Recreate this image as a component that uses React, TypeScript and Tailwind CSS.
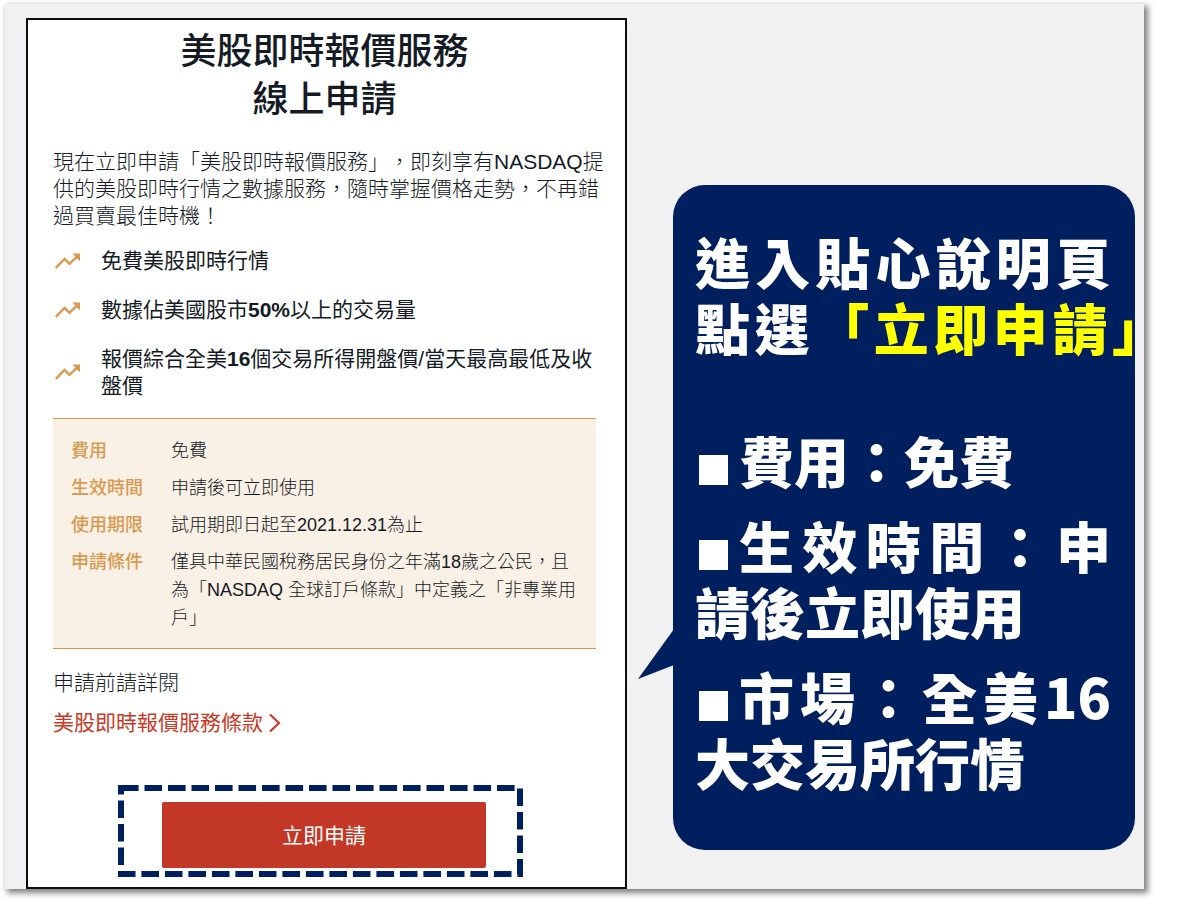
import type { ReactNode } from "react";

const features: { id: string; text: ReactNode }[] = [
  { id: "free", text: "免費美股即時行情" },
  {
    id: "volume",
    text: (
      <>
        數據佔美國股市<b className="font-bold">50%</b>以上的交易量
      </>
    ),
  },
  {
    id: "exchanges",
    text: (
      <>
        報價綜合全美<b className="font-bold">16</b>個交易所得開盤價/當天最高最低及收盤價
      </>
    ),
  },
];

const terms = [
  { label: "費用", value: "免費" },
  { label: "生效時間", value: "申請後可立即使用" },
  { label: "使用期限", value: "試用期即日起至2021.12.31為止" },
  {
    label: "申請條件",
    value: "僅具中華民國稅務居民身份之年滿18歲之公民，且為「NASDAQ 全球訂戶條款」中定義之「非專業用戶」",
  },
];

const notes = ["費用：免費", "生效時間：申請後立即使用", "市場：全美16大交易所行情"];

function TrendIcon() {
  return (
    <svg className="h-4 w-[26px] shrink-0" viewBox="0 0 26 16" fill="none" aria-hidden="true">
      <path d="M.8 14.8 9.5 6l5 4.8L22 3.5" stroke="#d99a50" strokeWidth="2.4" />
      <path d="M17.2.5H25V8.2l-2.4-2.2-2-.6-.6-2.3z" fill="#d99a50" />
    </svg>
  );
}

function FeatureList() {
  return (
    <ul className="mt-[18px] flex flex-col gap-[22px]">
      {features.map((feature) => (
        <li key={feature.id} className="flex items-center gap-5 pl-0.5">
          <TrendIcon />
          <span>{feature.text}</span>
        </li>
      ))}
    </ul>
  );
}

function TermsTable() {
  return (
    <div className="mt-[19px] border-y border-[#d9984f] bg-[#f9f0e6] px-[18px] pt-[18px] pb-4">
      <table className="w-full text-lg leading-7">
        <tbody>
          {terms.map((row) => (
            <tr key={row.label} className="group align-top">
              <th
                scope="row"
                className="w-[100px] p-0 pt-[9px] text-left font-medium text-[#d99a50] group-first:pt-0"
              >
                {row.label}
              </th>
              <td className="p-0 pt-[9px] font-light group-first:pt-0">{row.value}</td>
            </tr>
          ))}
        </tbody>
      </table>
    </div>
  );
}

function ApplyCard() {
  return (
    <main className="border-2 border-[#0b0f14] bg-white pt-2 pr-[29px] pb-2.5 pl-[25px] text-[21px] leading-[27px] text-[#141b24]">
      <h1 className="text-center text-4xl leading-[48px] font-medium">
        美股即時報價服務
        <br />
        線上申請
      </h1>
      <p className="mt-6 -mr-3 font-light">
        現在立即申請「美股即時報價服務」，即刻享有NASDAQ提供的美股即時行情之數據服務，隨時掌握價格走勢，不再錯過買賣最佳時機！
      </p>
      <FeatureList />
      <TermsTable />
      <p className="mt-5 font-light">申請前請詳閱</p>
      <a href="#terms" className="mt-[13px] flex items-center gap-1.5 text-[#c63a27]">
        美股即時報價服務條款
        <svg className="h-5 w-3" viewBox="0 0 12 20" fill="none" aria-hidden="true">
          <path d="M1 1.5 10 10l-9 8.5" stroke="currentColor" strokeWidth="2.2" />
        </svg>
      </a>
      <div className="relative mt-[49px] mr-[73px] ml-[65px] pt-[17px] pr-[37px] pb-[9px] pl-11">
        <svg
          className="pointer-events-none absolute inset-0 h-full w-full"
          viewBox="0 0 405 92"
          preserveAspectRatio="none"
          fill="none"
          aria-hidden="true"
        >
          <rect x="3" y="3" width="399" height="86" stroke="#001f5f" strokeWidth="6" strokeDasharray="17.6 5.9" />
        </svg>
        <button type="button" className="h-[66px] w-full rounded-xs bg-[#c33726] text-white">
          立即申請
        </button>
      </div>
    </main>
  );
}

function Callout() {
  return (
    <aside className="relative mt-[167px] self-start rounded-[32px] bg-[#001f5f] pt-[42px] pr-6 pb-14 pl-[22px] text-justify font-['Noto_Sans_CJK_TC',sans-serif] text-[55px] leading-[66px] font-black text-white">
      <svg className="absolute top-[444px] -left-[35px] h-[50px] w-9" viewBox="0 0 36 50" aria-hidden="true">
        <path d="M36 0 0 50l36-14z" fill="#001f5f" />
      </svg>
      <p className="[text-align-last:justify]">進入貼心說明頁</p>
      {/* closing bracket hangs past the right margin */}
      <p className="-mr-14 whitespace-nowrap [text-align-last:justify]">
        點選<span className="text-[#ffff00]">「立即申請」</span>
      </p>
      <ul className="mt-[67px] flex flex-col gap-[19px]">
        {notes.map((note) => (
          <li key={note}>
            <span className="float-left mt-[29px] mr-[11px] ml-1 h-[30px] w-[29px] bg-white" aria-hidden="true" />
            {note}
          </li>
        ))}
      </ul>
    </aside>
  );
}

export default function App() {
  return (
    <div
      lang="zh-Hant"
      className="bg-white pt-1 pr-14 pb-3 pl-[5px] font-['Liberation_Sans','Noto_Sans_CJK_TC',sans-serif] [text-spacing-trim:space-all]"
    >
      <div className="grid grid-cols-[601fr_462fr] gap-[46px] bg-[#f1f1f1] pt-3.5 pr-[9px] pl-[21px] shadow-[3px_3px_6px_1px_rgba(0,0,0,0.5)]">
        <ApplyCard />
        <Callout />
      </div>
    </div>
  );
}
